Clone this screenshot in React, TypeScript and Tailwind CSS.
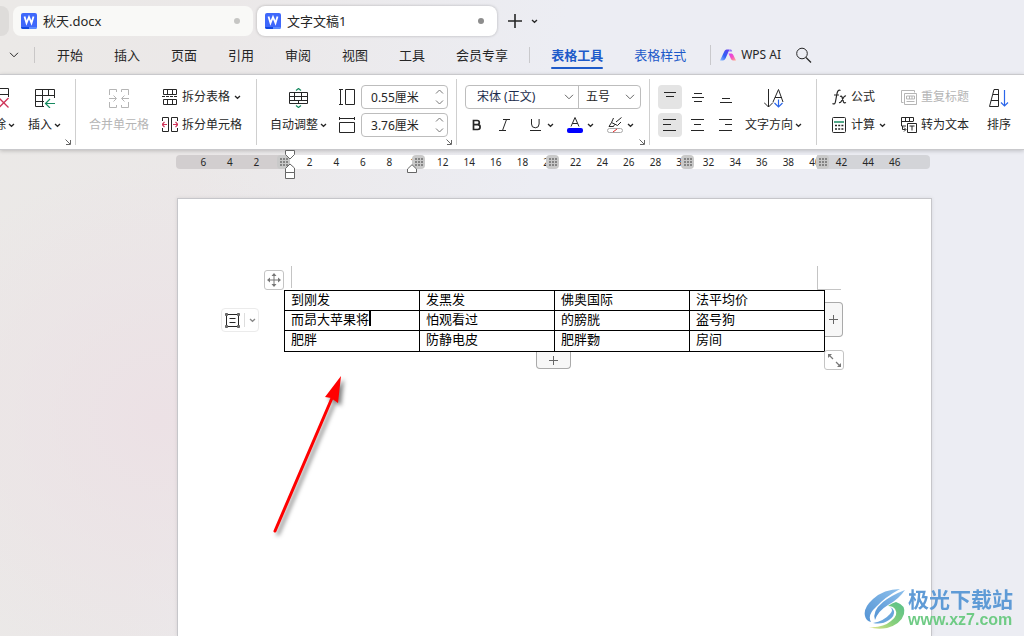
import type { ReactNode } from 'react'
import clsx from 'clsx'

const MENU = ['开始', '插入', '页面', '引用', '审阅', '视图', '工具', '会员专享']

const ROWS = [
  ['到刚发', '发黑发', '佛奥国际', '法平均价'],
  ['而昂大苹果将', '怕观看过', '的膀胱', '盗号狗'],
  ['肥胖', '防静电皮', '肥胖覅', '房间'],
]

const RULER = Array.from({ length: 27 }, (_, i) => Math.abs(i * 2 - 6))

function Icon({
  w,
  h,
  className,
  children,
}: {
  w: number
  h: number
  className?: string
  children: ReactNode
}) {
  return (
    <svg
      width={w}
      height={h}
      viewBox={`0 0 ${w} ${h}`}
      fill="none"
      stroke="currentColor"
      className={clsx('shrink-0', className)}
      aria-hidden="true"
    >
      {children}
    </svg>
  )
}

function Caret() {
  return (
    <Icon w={7} h={5}>
      <path d="M1 1l2.500 2.300L6 1" strokeWidth="1.300" />
    </Icon>
  )
}

function Chevron({ className }: { className?: string }) {
  return (
    <Icon w={10} h={6} className={className}>
      <path d="M1 .8l4 4 4-4" />
    </Icon>
  )
}

function WriterLogo() {
  return (
    <Icon w={16} h={16}>
      <rect width="16" height="16" rx="2" fill="#3f68fb" stroke="none" />
      <path d="M0 14h8v2H2a2 2 0 0 1-2-2z" fill="#1148e0" stroke="none" />
      <path d="M8 14h8a2 2 0 0 1-2 2H8z" fill="#5b8bff" stroke="none" />
      <path d="M3.500 3.500l2 6.500L8 4l2.500 6 2-6.500" stroke="#fff" strokeWidth="1.800" />
    </Icon>
  )
}

function DocTab({ title, active }: { title: string; active?: boolean }) {
  return (
    <button
      className={clsx(
        'flex h-[30px] w-60 items-center rounded-lg pr-[13px] pl-2 text-[13px] leading-5',
        active ? 'bg-white shadow-[0_0_3px_#00000040]' : 'bg-[#f9f9f7]'
      )}
    >
      <WriterLogo />
      <span className="ml-1.5">{title}</span>
      <span
        className={clsx(
          'ml-auto size-1.5 rounded-full',
          active ? 'bg-[#8d8d8d]' : 'bg-[#c6c6c4]'
        )}
      />
    </button>
  )
}

function TabBar() {
  return (
    <div className="flex h-9 items-end gap-1">
      <div className="h-[30px] w-[9px] rounded-r-lg bg-[#dedcda]" />
      <DocTab title="秋天.docx" />
      <DocTab title="文字文稿1" active />
      <button aria-label="新建" className="ml-[7px] flex h-[30px] w-[15px] items-center">
        <Icon w={14} h={14}>
          <path d="M7 0v14M0 7h14" strokeWidth="1.600" />
        </Icon>
      </button>
      <button aria-label="标签列表" className="ml-1 flex h-[30px] items-center">
        <Caret />
      </button>
    </div>
  )
}

function MenuBar() {
  return (
    <nav className="flex h-[38px] items-center text-[13px] leading-5 whitespace-nowrap">
      <button aria-label="更多" className="ml-[9px]">
        <Chevron />
      </button>
      <span className="ml-[15px] h-4 w-px bg-[#c9c7c7]" />
      <div className="ml-[22px] flex gap-[31px]">
        {MENU.map((item) => (
          <button key={item}>{item}</button>
        ))}
      </div>
      <span className="ml-[21px] h-4 w-px bg-[#c9c9cc]" />
      <button className="relative ml-[21px] font-bold text-[#1d5ac9]">
        表格工具
        <span className="absolute inset-x-0 -bottom-1 h-0.5 rounded-full bg-[#1d5ac9]" />
      </button>
      <button className="ml-[31px] text-[#1d5ac9]">表格样式</button>
      <span className="ml-6 h-5 w-px bg-[#c9c9cc]" />
      <button className="ml-[9px] flex items-center gap-1 text-xs">
        <Icon w={17} h={12}>
          <defs>
            <linearGradient id="ai-left" x1="0" y1="1" x2="1" y2="0">
              <stop offset="0" stopColor="#8fc0ff" />
              <stop offset=".45" stopColor="#2f62f5" />
              <stop offset="1" stopColor="#6a3cf0" />
            </linearGradient>
            <linearGradient id="ai-right" x1="0" y1="0" x2="1" y2="1">
              <stop offset="0" stopColor="#d83cf5" />
              <stop offset=".5" stopColor="#f54fc4" />
              <stop offset="1" stopColor="#ffb08a" />
            </linearGradient>
          </defs>
          <path d="M0 11.500L4.500 2Q5.200.5 6.500.5H9.500L5.500 9.500Q4.500 11.500 3 11.500z" fill="url(#ai-left)" stroke="none" />
          <path d="M8.500 4.500h3.200q1 .2 1.600 1.500l2.700 5.500h-3q-1.500-.3-2-1.500z" fill="url(#ai-right)" stroke="none" />
          <path d="M9.500.5h1.500q1 .3 1.200 2H9z" fill="#8d7bf5" stroke="none" />
        </Icon>
        WPS AI
      </button>
      <button aria-label="搜索" className="ml-[15px]">
        <Icon w={16} h={16}>
          <circle cx="6" cy="6.500" r="5.300" />
          <path d="M10 10.500l5 5" strokeWidth="1.200" />
        </Icon>
      </button>
    </nav>
  )
}

function Group({
  className,
  launcher,
  last,
  children,
}: {
  className?: string
  launcher?: boolean
  last?: boolean
  children: ReactNode
}) {
  return (
    <div className={clsx('relative flex h-[66px] shrink-0 pt-1.5', !last && 'border-r border-[#cfcfcf]', className)}>
      {children}
      {launcher && (
        <button aria-label="更多设置" className="absolute right-1 bottom-0 text-[#666]">
          <Icon w={6} h={6}>
            <path d="M.5.5l4.500 4.500M5.500 1v4.500H1" />
          </Icon>
        </button>
      )}
    </div>
  )
}

// tall button: icon in the first row, label in the second
function BigButton({
  icon,
  label,
  menu,
  disabled,
  className,
}: {
  icon: ReactNode
  label: string
  menu?: boolean
  disabled?: boolean
  className?: string
}) {
  return (
    <button
      disabled={disabled}
      className={clsx('flex shrink-0 flex-col gap-1 whitespace-nowrap', disabled && 'text-[#b5b5b5]', className)}
    >
      <span className="flex h-6 w-full items-center justify-center pt-0.5">{icon}</span>
      <span className="flex h-6 items-center gap-0.5">
        {label}
        {menu && <Caret />}
      </span>
    </button>
  )
}

function RowButton({
  icon,
  label,
  menu,
  disabled,
}: {
  icon: ReactNode
  label: string
  menu?: boolean
  disabled?: boolean
}) {
  return (
    <button
      disabled={disabled}
      className={clsx('flex h-6 items-center gap-1 whitespace-nowrap', disabled && 'text-[#b5b5b5]')}
    >
      {icon}
      {label}
      {menu && <Caret />}
    </button>
  )
}

function Spinner({ label, value, icon }: { label: string; value: string; icon: ReactNode }) {
  return (
    <label className="relative flex items-center gap-1.5">
      {icon}
      <input
        aria-label={label}
        defaultValue={value}
        className="h-6 w-[87px] rounded-[4px] border border-[#bdbdbd] bg-white pl-[9px] text-xs"
      />
      <span className="absolute right-1 flex flex-col gap-1.5 text-[#777]">
        <Icon w={9} h={5}>
          <path d="M1 4.500l3.500-3.500L8 4.500" />
        </Icon>
        <Icon w={9} h={5}>
          <path d="M1 .5l3.500 3.500L8 .5" />
        </Icon>
      </span>
    </label>
  )
}

function AlignButton({ label, d, active }: { label: string; d: string; active?: boolean }) {
  return (
    <button
      aria-label={label}
      className={clsx('flex size-6 items-center justify-center rounded-[4px]', active && 'bg-[#e4e4e4]')}
    >
      <Icon w={14} h={12}>
        <path d={d} />
      </Icon>
    </button>
  )
}

function Ribbon() {
  return (
    <div className="relative flex h-[76px] items-start overflow-hidden border-y border-[#c9c9cc] bg-white pt-1 text-xs leading-4 shadow-[0_1px_4px_#00000033]">
      <Group className="w-[76px]" launcher>
        <BigButton
          label="删除"
          menu
          className="-ml-[18px]"
          icon={
            <Icon w={20} h={20}>
              <path d="M.5 11V.5h19V9M0 6.500h19.500M7.500 0v11" />
              <path d="M10 10l9.500 9.500M19.500 10L10 19.500" stroke="#cf3358" strokeWidth="1.300" />
            </Icon>
          }
        />
        <BigButton
          label="插入"
          menu
          className="ml-[13px]"
          icon={
            <Icon w={20} h={19}>
              <path d="M9 17.500H.5V.5h19V9M0 6.500h19.500M7.500 0v17.500M0 12.500h9M13.500.5v6" />
              <path d="M20 14.500h-9M15 10l-4.500 4.500L15 19" stroke="#178a60" strokeWidth="1.200" />
            </Icon>
          }
        />
      </Group>

      <Group className="w-[181px] pl-[13px]">
        <BigButton
          label="合并单元格"
          disabled
          icon={
            <Icon w={20} h={19}>
              <path d="M.5 6V.5h7V3M.5 13v5.500h7V16M19.500 6V.5h-7V3M19.500 13v5.500h-7V16" />
              <path d="M0 9.500h7M4.500 6.500l3 3-3 3M20 9.500h-7M15.500 6.500l-3 3 3 3" />
            </Icon>
          }
        />
        <div className="ml-[13px] flex flex-col items-start gap-1">
          <RowButton
            label="拆分表格"
            menu
            icon={
              <Icon w={16} h={16}>
                <path d="M1.500.5h13v5h-13zM1.500 10.500h13v5h-13zM5.500.5v5M10.500.5v5M5.500 10.500v5M10.500 10.500v5" />
                <path d="M0 7.500h16" strokeDasharray="3 1" />
              </Icon>
            }
          />
          <RowButton
            label="拆分单元格"
            icon={
              <Icon w={16} h={16}>
                <path d="M.5 4V.5h6v14h-6V11M15.500 4V.5h-6v14h6V11" />
                <path d="M0 7.500h5M2.500 5L0 7.500 2.500 10M16 7.500h-5M13.500 5L16 7.500 13.500 10" stroke="#cf3358" strokeWidth="1.200" />
              </Icon>
            }
          />
        </div>
      </Group>

      <Group className="w-[200px] pl-[13px]" launcher>
        <BigButton
          label="自动调整"
          menu
          icon={
            <Icon w={20} h={20}>
              <path d="M.5 4.500h18v11H.5zM0 8.500h18.500M0 12.500h18.500M5.500 4.500v8M12.500 4.500v8M9.500 12.500v3" />
              <path d="M7 2.500L9.500.5l2.500 2M7 17.500l2.500 2 2.500-2" stroke="#178a60" strokeWidth="1.200" />
            </Icon>
          }
        />
        <div className="ml-3 flex flex-col gap-1">
          <Spinner
            label="行高"
            value="0.55厘米"
            icon={
              <Icon w={16} h={16}>
                <path d="M6.500.5h9v15h-9zM0 .5h4M0 15.500h4M1.500.5v15" />
              </Icon>
            }
          />
          <Spinner
            label="列宽"
            value="3.76厘米"
            icon={
              <Icon w={16} h={16}>
                <path d="M.5 5.500h15v10H.5zM.5 0v3M15.500 0v3M.5 1.500h15" />
              </Icon>
            }
          />
        </div>
      </Group>

      <Group className="w-[193px] pl-2" launcher>
        <div className="flex flex-col gap-1">
          <div className="flex h-6 rounded-[4px] border border-[#bdbdbd]">
            <label className="relative flex items-center border-r border-[#bdbdbd]">
              <select aria-label="字体" className="h-full w-28 appearance-none pl-[11px] text-xs text-[#1c2c4c]">
                <option>宋体 (正文)</option>
              </select>
              <Chevron className="absolute right-1 text-[#666]" />
            </label>
            <label className="relative flex items-center">
              <select aria-label="字号" className="h-full w-[61px] appearance-none pl-[7px] text-xs">
                <option>五号</option>
              </select>
              <Chevron className="absolute right-[5px] text-[#666]" />
            </label>
          </div>
          <div className="flex h-6 items-center pl-[7px]">
            <button aria-label="加粗">
              <Icon w={10} h={12}>
                <path d="M1.500 1.500h3.700a2 2 0 0 1 0 4.200H1.500zM1.500 5.700h4.200a2.400 2.400 0 0 1 0 4.800H1.500z" strokeWidth="1.700" />
              </Icon>
            </button>
            <button aria-label="倾斜" className="ml-[17px]">
              <Icon w={11} h={12}>
                <path d="M4 .5h7M0 11.500h7M7.500.5l-4 11" />
              </Icon>
            </button>
            <button aria-label="下划线" className="ml-5 flex items-center gap-1.5">
              <Icon w={11} h={12}>
                <path d="M1.500 0v5a3.800 3.800 0 0 0 7.600 0V0M0 11.500h11" />
              </Icon>
              <Caret />
            </button>
            <button aria-label="字体颜色" className="ml-[13px] flex items-center gap-1">
              <Icon w={16} h={16}>
                <path d="M4 9.500L8 .5l4 9M5.500 6.500h5" />
                <rect y="11" width="16" height="5" rx="2" fill="#00f" stroke="none" />
              </Icon>
              <Caret />
            </button>
            <button aria-label="突出显示" className="ml-[13px] flex items-center gap-1">
              <Icon w={16} h={16}>
                <path d="M14.500.5L9 5M6.500 1l-2 4.500 6 3L14 5M4.500 5.500L2 9.500h4.500l1-2" />
                <rect x=".5" y="11.500" width="15" height="4" rx="2" stroke="#a8a8a8" />
                <path d="M6 15l4-3" stroke="#e02020" />
              </Icon>
              <Caret />
            </button>
          </div>
        </div>
      </Group>

      <Group className="w-[167px] pl-2">
        <div className="grid h-[52px] grid-cols-3 gap-1">
          <AlignButton label="靠上" d="M1 1.500h12M3 5.500h8" active />
          <AlignButton label="垂直居中" d="M3 2.500h8M1 6.500h12M3 10.500h8" />
          <AlignButton label="靠下" d="M3 7.500h8M1 11.500h12" />
          <AlignButton label="左对齐" d="M0 .5h13M0 5.500h8M0 11.500h13" active />
          <AlignButton label="居中" d="M0 .5h13M3 5.500h7M0 11.500h13" />
          <AlignButton label="右对齐" d="M0 .5h13M6 5.500h7M0 11.500h13" />
        </div>
        <BigButton
          label="文字方向"
          menu
          className="ml-[7px]"
          icon={
            <Icon w={20} h={19}>
              <path d="M4.500 0v18M0 13.500L4.500 18 9 13.500M9 13l5.500-12.500L19 13M11 8.500h7" />
              <path d="M14.500 10.500V18M10.500 14l4 4 4-4" stroke="#2b66ea" strokeWidth="1.200" />
            </Icon>
          }
        />
      </Group>

      <Group className="pl-[15px]" last>
        <div className="flex flex-col items-start gap-1">
          <RowButton
            label="公式"
            icon={
              <Icon w={15} h={16}>
                <path d="M8.500 1.500Q6 0 5 4.500l-1.500 8Q3 16 .5 14.500M2 6h5M8 7.500q1.500-1 2 .5l1.500 5q.5 1.500 2.500.5M14 7q-1.500-.5-3 2.500l-1.500 2.500q-1 2-2.500 1.500" strokeWidth="1.200" />
              </Icon>
            }
          />
          <RowButton
            label="计算"
            menu
            icon={
              <Icon w={15} h={16}>
                <rect x=".5" y=".5" width="13" height="15" rx="1" />
                <path d="M2 5h10" stroke="#178a60" strokeWidth="1.500" />
                <path d="M3 8.500h8.500M3 12h8.500" strokeWidth="1.700" strokeDasharray="2 1.200" />
              </Icon>
            }
          />
        </div>
        <div className="ml-[15px] flex flex-col items-start gap-1">
          <RowButton
            label="重复标题"
            disabled
            icon={
              <Icon w={16} h={15}>
                <path d="M2.500 12.500H.5V.5h13v2M3.500 3.500h12v11h-12zM5.500 11.500h8M5.500 6h8v3h-8zM8.500 6v3M11 6v3" />
              </Icon>
            }
          />
          <RowButton
            label="转为文本"
            icon={
              <Icon w={16} h={16}>
                <path d="M.5 6V.5h12V4M.5 4.500h12M4.500.5v4M8.500.5v4M5 9H.5V6M1.500 9v3.500h3M3 10.500l2 2-2 2M6.500 6.500h9v9h-9zM8.500 9h5M11 9v4.500" />
              </Icon>
            }
          />
        </div>
        <BigButton
          label="排序"
          className="ml-[18px]"
          icon={
            <Icon w={20} h={18}>
              <path d="M5 .5h4.500v17H.5zM4 5.500h5.500M2 11.500h7.500" />
              <path d="M15.500 1v16M12 13.500l3.500 3.500 3.500-3.500" stroke="#2b66ea" strokeWidth="1.200" />
            </Icon>
          }
        />
      </Group>
    </div>
  )
}

function ColumnHandle({ className }: { className: string }) {
  return (
    <span className={clsx('absolute top-0 flex h-3.5 w-[13px] items-center justify-center rounded-[4px] bg-[#c9c9c9]', className)}>
      <Icon w={8} h={8}>
        <path d="M0 1h8M0 4h8M0 7h8" stroke="#858585" strokeWidth="2" strokeDasharray="2 1" />
      </Icon>
    </span>
  )
}

function Ruler() {
  return (
    <div className="relative mt-[5px] h-3.5 w-[754px] rounded-[4px] bg-[linear-gradient(90deg,#d2cecf_113px,#fff_113px,#fff_641px,#d3d4d8_641px)]">
      <div className="flex h-full items-center pr-[22px] pl-3.5 text-[10px] leading-3">
        {RULER.map((n, i) => (
          <span key={i} className="flex-1 text-center">
            {n || ''}
          </span>
        ))}
      </div>
      <ColumnHandle className="left-[101px]" />
      <ColumnHandle className="left-[236px]" />
      <ColumnHandle className="left-[370px]" />
      <ColumnHandle className="left-[505px]" />
      <ColumnHandle className="left-[640px]" />
      <Icon w={10} h={29} className="absolute -top-[5px] left-[109px] text-[#666]">
        <path d="M.5.5h9v4L5 9 .5 4.500zM.5 22.500v-4L5 14l4.500 4v4.500zM.5 22.500h9v6h-9z" fill="#fff" />
      </Icon>
      <Icon w={10} h={10} className="absolute top-[9px] left-[231px] text-[#666]">
        <path d="M.5 8.500V5L5 .7 9.500 5v3.500z" fill="#fff" />
      </Icon>
    </div>
  )
}

function DocTable() {
  return (
    <div className="relative w-[541px]">
      <table className="w-full table-fixed border-collapse font-[family-name:'Noto_Sans_CJK_SC',sans-serif] text-[13px] leading-4 text-black">
        <tbody>
          {ROWS.map((row, r) => (
            <tr key={r} className="h-5 last:h-[21px]">
              {row.map((cell, c) => (
                <td key={c} className="border border-black px-1.5 pt-0 pb-[3px] align-top">
                  {cell}
                  {r === 1 && c === 0 && <span className="inline-block h-[15px] w-0.5 bg-black align-top" />}
                </td>
              ))}
            </tr>
          ))}
        </tbody>
      </table>

      <span className="absolute -top-6 left-[7px] h-[22px] w-px bg-[#c4c4c4]" />
      <span className="absolute -top-6 left-[533px] h-6 w-6 border-b border-l border-[#c4c4c4]" />

      <button
        aria-label="移动表格"
        className="absolute -top-5 -left-5 flex size-5 items-center justify-center rounded-[3px] border border-[#c4c4c4] bg-white text-[#777]"
      >
        <Icon w={14} h={14}>
          <path d="M7 1v12M1 7h12" />
          <path d="M7 0l2.500 3h-5zM7 14l2.500-3h-5zM0 7l3-2.500v5zM14 7l-3-2.500v5z" fill="currentColor" stroke="none" />
        </Icon>
      </button>

      <button
        aria-label="表格布局"
        className="absolute top-[18px] -left-[63px] flex h-6 w-[38px] items-center justify-center gap-1 rounded-[4px] border border-[#ebebeb] bg-white"
      >
        <Icon w={15} h={15}>
          <path d="M2 1.500h11M2 13.500h11M1.500 2v11M13.500 2v11M4.500 5.500h6M4.500 9.500h6" />
          <path d="M.5.5h2v2h-2zM12.500.5h2v2h-2zM.5 12.500h2v2h-2zM12.500 12.500h2v2h-2z" fill="#777" stroke="#666" />
        </Icon>
        <span className="h-3.5 w-px bg-[#ddd]" />
        <span className="text-[#888]">
          <Caret />
        </span>
      </button>

      <button
        aria-label="添加列"
        className="absolute top-3 left-[541px] flex h-[35px] w-[18px] items-center justify-center rounded-r-[4px] border border-l-0 border-[#aaa] bg-[#f7f7f7] text-[#666]"
      >
        <Icon w={9} h={9}>
          <path d="M4.500 0v9M0 4.500h9" />
        </Icon>
      </button>
      <button
        aria-label="添加行"
        className="absolute top-full left-[252px] flex h-[17px] w-[35px] items-center justify-center rounded-b-[4px] border border-t-0 border-[#aaa] bg-[#f7f7f7] text-[#666]"
      >
        <Icon w={9} h={9}>
          <path d="M4.500 0v9M0 4.500h9" />
        </Icon>
      </button>
      <button
        aria-label="调整大小"
        className="absolute -right-[19px] -bottom-[18px] flex size-5 items-center justify-center rounded-[3px] border border-[#c4c4c4] bg-white text-[#777]"
      >
        <Icon w={13} h={13}>
          <path d="M1 1l4 4M8 8l4 4" strokeWidth="1.200" />
          <path d="M0 0h4L0 4zM13 13V9l-4 4z" fill="currentColor" stroke="none" />
        </Icon>
      </button>

      {/* pointer to the table */}
      <svg
        width="80"
        height="170"
        viewBox="0 0 80 170"
        className="absolute top-20 -left-4 drop-shadow-[3px_3px_2px_#00000080]"
        aria-hidden="true"
      >
        <path d="M7 161L64 28" stroke="#f00" strokeWidth="3" strokeLinecap="round" />
        <path d="M73 6L57 27l6 1 7 5z" fill="#f00" />
      </svg>
    </div>
  )
}

function Watermark() {
  return (
    <div className="fixed right-[11px] bottom-1.5 flex items-center gap-0.5 whitespace-nowrap">
      <svg width="42" height="42" viewBox="0 0 42 42" aria-hidden="true">
        <defs>
          <linearGradient id="wm-green" x1="0" y1="1" x2="1" y2="0">
            <stop offset="0" stopColor="#e6e58a" />
            <stop offset=".45" stopColor="#86cf7c" />
            <stop offset="1" stopColor="#57c08a" />
          </linearGradient>
          <linearGradient id="wm-blue" x1="0" y1="1" x2="1" y2="0">
            <stop offset="0" stopColor="#5393d4" />
            <stop offset="1" stopColor="#8fc1ec" />
          </linearGradient>
        </defs>
        <path d="M36 1Q20 1 9 11-1 20 1 28q1 5 6 6-4-7 5-15Q21 9 36 1z" fill="url(#wm-blue)" />
        <path d="M41 2Q28 7 19 14 8 23 11 32q3-9 13-15Q35 11 41 2z" fill="url(#wm-blue)" />
        <path d="M32 14q10 3 8 12-3 10-17 14-10 2-18-1 14 1 22-6 8-6 4-12-2-3-7-3 4-3 8-4z" fill="url(#wm-green)" />
        <path d="M26 19q4 3 0 7-6 7-17 9 9 2 16-3 6-4 5-9-1-3-4-4z" fill="#6aa6dd" />
      </svg>
      <div>
        <div className="text-[21px] leading-[22px] font-bold text-[#5f9bd6]">极光下载站</div>
        <div className="font-[family-name:'Liberation_Sans',sans-serif] text-base leading-5 font-bold text-[#6fcb85]">
          www.xz7.com
        </div>
      </div>
    </div>
  )
}

export default function App() {
  return (
    <div className="flex min-h-screen flex-col overflow-x-hidden bg-[radial-gradient(circle_at_160px_420px,#ece1e5,#ece1e500_260px),linear-gradient(100deg,#ebe9e7,#ebe8e8_20%,#ecedf3_50%,#ecedf3)] font-[family-name:'Noto_Sans','Noto_Sans_CJK_SC',sans-serif] text-[#262626]">
      <TabBar />
      <MenuBar />
      <Ribbon />
      <main className="flex grow flex-col pl-44">
        <Ruler />
        <div className="mt-[29px] ml-px w-[755px] grow border border-b-0 border-[#c6c6ca] bg-white pt-[91px] pb-10 pl-[106px] shadow-[0_0_4px_#00000018]">
          <DocTable />
        </div>
      </main>
      <Watermark />
    </div>
  )
}
